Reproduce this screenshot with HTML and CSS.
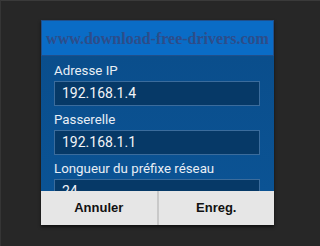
FILE: index.html
```html
<!DOCTYPE html>
<html lang="fr">
<head>
    <meta charset="UTF-8" />
    <title>IP settings</title>
    <link rel="stylesheet" href="styles.css">
</head>
<body>
    <div class="screen">
        <div class="dialog">
            <div class="dialog-header">www.download-free-drivers.com</div>
            <div class="dialog-body">
                <div class="field">
                    <div class="label">Adresse IP</div>
                    <div class="input">192.168.1.4</div>
                </div>
                <div class="field">
                    <div class="label">Passerelle</div>
                    <div class="input">192.168.1.1</div>
                </div>
                <div class="field">
                    <div class="label">Longueur du préfixe réseau</div>
                    <div class="input">24</div>
                </div>
            </div>
            <div class="dialog-buttons">
                <div class="btn">Annuler</div>
                <div class="btn">Enreg.</div>
            </div>
        </div>
    </div>
</body>
</html>
```

FILE: styles.css
```css
html,
body {
    margin: 0;
    height: 100%;
}

body {
    background-color: #272727;
    font-family: Roboto, 'Liberation Sans', sans-serif;
}

.screen {
    height: 100%;
    box-sizing: border-box;
    border-top: 1px solid #3a3a3a;
    border-left: 1px solid #353535;
    padding: 19px 0 0 40px;
}

.dialog {
    width: 233px;
    box-shadow: 0 2px 3px rgba(0, 0, 0, 0.6);
}

.dialog-header {
    height: 34px;
    background-color: #0a6cc6;
    border: 1px solid #1f4f8c;
    font-family: 'Liberation Serif', serif;
    font-weight: bold;
    font-size: 16px;
    color: #2d4d8a;
    line-height: 36px;
    text-align: center;
    white-space: nowrap;
}

.dialog-body {
    height: 135px;
    overflow: hidden;
    background: linear-gradient(to bottom, #0a4e8c, #0b5394);
    padding: 5px 14px 0 13px;
    box-sizing: border-box;
}

.field {
    margin-bottom: 4px;
}

.label {
    height: 20px;
    line-height: 20px;
    font-size: 13.3px;
    color: #e8eef5;
}

.input {
    height: 23px;
    line-height: 23px;
    background-color: #063967;
    border: 1px solid #3b6c9c;
    padding-left: 7px;
    font-size: 14px;
    color: #f2f4f7;
}

.dialog-buttons {
    display: flex;
    height: 34px;
    background-color: #e6e6e6;
}

.btn {
    flex: 1;
    text-align: center;
    line-height: 34px;
    font-family: 'Liberation Sans', sans-serif;
    font-weight: bold;
    font-size: 13px;
    color: #111;
}

.btn + .btn {
    border-left: 2px solid #c9c9c9;
}
```
